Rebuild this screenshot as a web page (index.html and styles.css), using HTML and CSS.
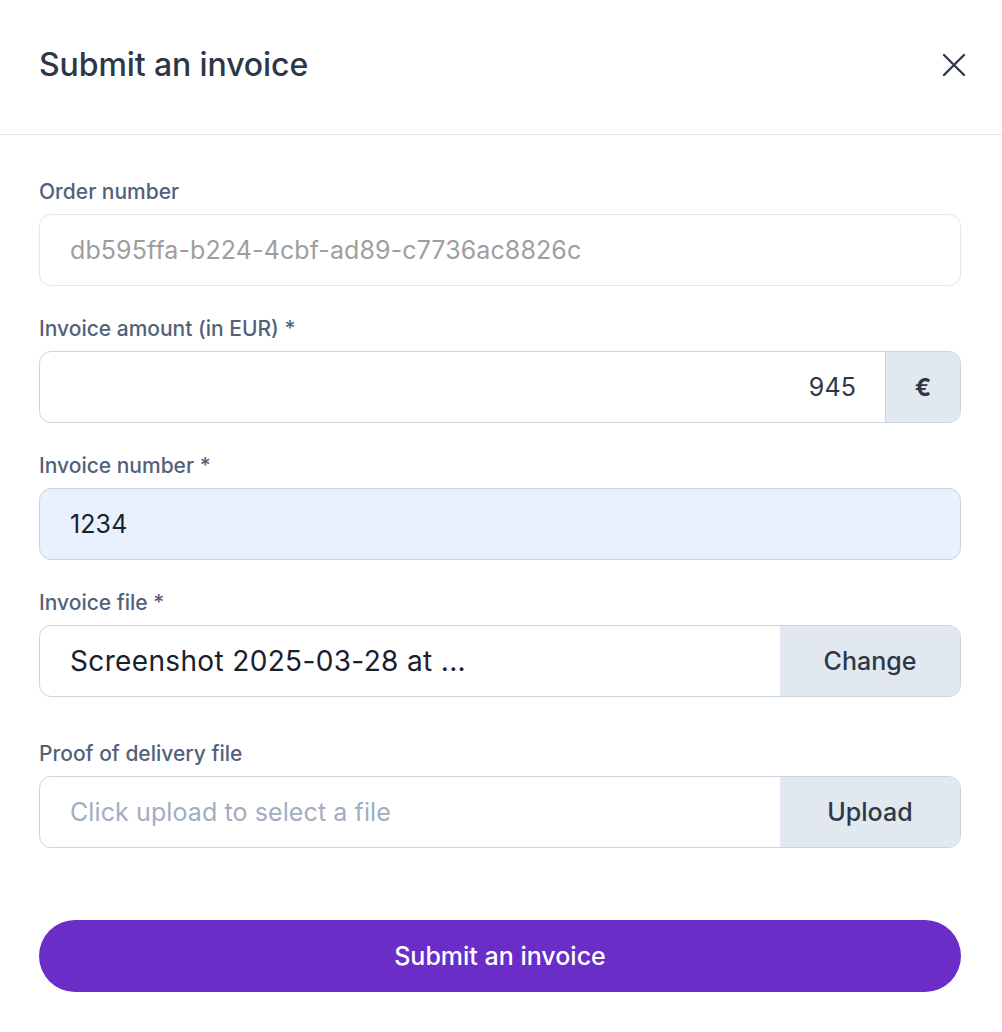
FILE: index.html
```html
<!DOCTYPE html>
<html lang="en">
<head>
<meta charset="utf-8">
<title>Submit an invoice</title>
<link rel="stylesheet" href="styles.css">
</head>
<body>
<div class="modal">
  <header class="modal-header">
    <h1 class="modal-title">Submit an invoice</h1>
    <button class="close-btn" aria-label="Close">
      <svg width="24" height="24" viewBox="0 0 24 24" fill="none" stroke="#2d3748" stroke-width="2.3" stroke-linecap="round"><path d="M2 2L22 22M22 2L2 22"/></svg>
    </button>
  </header>
  <form class="modal-body">
    <div class="field">
      <label class="label">Order number</label>
      <div class="control control-disabled">
        <span class="value value-disabled">db595ffa-b224-4cbf-ad89-c7736ac8826c</span>
      </div>
    </div>
    <div class="field">
      <label class="label">Invoice amount (in EUR) *</label>
      <div class="control">
        <span class="value value-right">945</span>
        <span class="addon addon-euro">€</span>
      </div>
    </div>
    <div class="field">
      <label class="label">Invoice number *</label>
      <div class="control control-filled">
        <span class="value">1234</span>
      </div>
    </div>
    <div class="field field-spaced">
      <label class="label">Invoice file *</label>
      <div class="control control-file">
        <span class="value value-file">Screenshot 2025-03-28 at ...</span>
        <span class="addon addon-btn">Change</span>
      </div>
    </div>
    <div class="field">
      <label class="label">Proof of delivery file</label>
      <div class="control control-file">
        <span class="value value-placeholder">Click upload to select a file</span>
        <span class="addon addon-btn">Upload</span>
      </div>
    </div>
    <button type="button" class="submit-btn">Submit an invoice</button>
  </form>
</div>
</body>
</html>
```

FILE: styles.css
```css
* { box-sizing: border-box; }
html, body { margin: 0; padding: 0; background: #ffffff; }
body { font-family: Inter, "Noto Sans", "Liberation Sans", sans-serif; color: #2d3748; }

.modal { width: 1002px; }

.modal-header {
  height: 135px;
  border-bottom: 1px solid #e2e8f0;
  display: flex;
  align-items: center;
  justify-content: space-between;
  padding: 0 36px 4px 39px;
}
.modal-title {
  margin: 0;
  font-size: 32px;
  font-weight: 500;
  letter-spacing: -0.1px;
  color: #2d3748;
  line-height: 40px;
}
.close-btn {
  background: none;
  border: 0;
  padding: 0;
  width: 24px;
  height: 24px;
  display: flex;
  cursor: pointer;
}

.modal-body {
  padding: 45px 41px 0 39px;
  display: flex;
  flex-direction: column;
}

.field { display: flex; flex-direction: column; margin-bottom: 31px; }
.field-spaced { margin-bottom: 45px; }
.field:last-of-type { margin-bottom: 72px; }

.label {
  font-size: 21px;
  line-height: 24px;
  font-weight: 500;
  color: #52627a;
  margin-bottom: 10px;
}

.control {
  height: 72px;
  border: 1px solid #cbd5e0;
  border-radius: 12px;
  display: flex;
  align-items: stretch;
  overflow: hidden;
  background: #fff;
}
.control-disabled { border-color: #e2e8f0; }
.control-filled { background: #e8f0fd; }

.value {
  flex: 1;
  display: flex;
  align-items: center;
  padding: 0 30px;
  font-size: 25px;
  color: #1a202c;
  letter-spacing: 0.1px;
}
.value-disabled { color: #9e9e9e; }
.value-right { justify-content: flex-end; padding-right: 29px; color: #2d3748; }
.value-file { font-size: 28px; color: #1a202c; letter-spacing: 0.35px; }
.value-placeholder { color: #a0aec0; }

.addon {
  display: flex;
  align-items: center;
  justify-content: center;
  background: #e2e8f0;
  color: #2d3748;
}
.addon-euro {
  width: 75px;
  border-left: 1px solid #cbd5e0;
  font-size: 24px;
  font-weight: 700;
}
.addon-btn {
  width: 180px;
  font-size: 25px;
  font-weight: 500;
}

.submit-btn {
  height: 72px;
  border: 0;
  border-radius: 36px;
  background: #6a2dc8;
  color: #ffffff;
  font-family: inherit;
  font-size: 25px;
  font-weight: 500;
  cursor: pointer;
}
```
